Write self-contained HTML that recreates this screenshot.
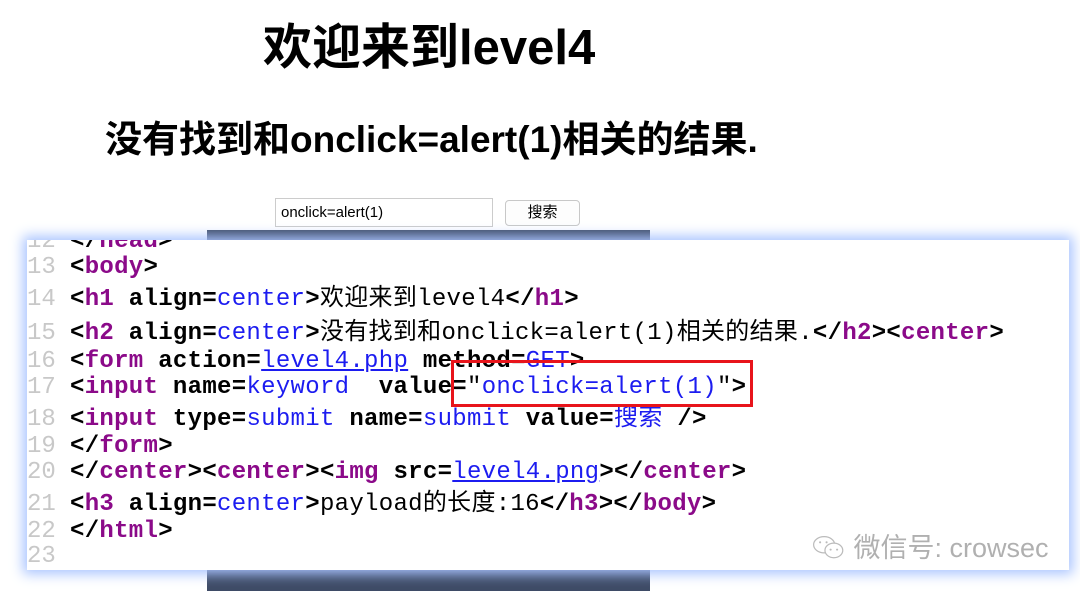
<!DOCTYPE html>
<html><head><meta charset="utf-8"><style>
body{margin:0;width:1080px;height:591px;background:#fff;position:relative;overflow:hidden;font-family:"Liberation Sans","Noto Sans CJK SC",sans-serif}
.h1{position:absolute;left:263px;top:18px;font-size:49px;font-weight:bold;white-space:nowrap;line-height:60px}
.h2{position:absolute;left:105px;top:117px;font-size:37px;font-weight:bold;white-space:nowrap;line-height:46px}
.inp{position:absolute;left:275px;top:198px;width:218px;height:29px;border:1px solid #ccc;box-sizing:border-box;font-size:15px;line-height:27px;padding-left:5px}
.btn{position:absolute;left:505px;top:200px;width:75px;height:26px;border:1px solid #c8c8c8;border-radius:4px;box-sizing:border-box;font-size:15px;text-align:center;line-height:24px;background:#fdfdfd}
.dark{position:absolute;left:207px;top:230px;width:443px;height:361px;background:#3e4b66}
.panel{position:absolute;left:27px;top:240px;width:1042px;height:330px;background:#fff;box-shadow:0 0 12px 4px #a9c4ff;overflow:hidden}
.ln{position:absolute;left:0;font-family:"Liberation Mono","Noto Sans CJK SC",monospace;font-size:24px;line-height:28px;white-space:pre;color:#000;font-weight:bold;letter-spacing:0.3px}
.n{color:#c8c8c8;font-weight:normal;display:inline-block;width:43px;letter-spacing:0}
.t{color:#8b0a89}.v{color:#1c1cf0;font-weight:normal}.u{color:#1c1cf0;font-weight:normal;text-decoration:underline}.p{font-weight:normal}
.red{position:absolute;left:451px;top:360px;width:302px;height:47px;border:3px solid #e8141b;box-sizing:border-box}
.wm{position:absolute;left:812px;top:526px;font-size:27px;color:#b0b0b0;white-space:nowrap}
</style></head><body>
<div class="h1">欢迎来到level4</div>
<div class="h2">没有找到和onclick=alert(1)相关的结果.</div>
<div class="inp">onclick=alert(1)</div>
<div class="btn">搜索</div>
<div class="dark"></div>
<div class="panel">
<div class="ln" style="top:-12px"><span class="n">12</span>&lt;/<span class="t">head</span>&gt;</div>
<div class="ln" style="top:14px"><span class="n">13</span>&lt;<span class="t">body</span>&gt;</div>
<div class="ln" style="top:46px"><span class="n">14</span>&lt;<span class="t">h1</span> align=<span class="v">center</span>&gt;<span class="p">欢迎来到level4</span>&lt;/<span class="t">h1</span>&gt;</div>
<div class="ln" style="top:80px"><span class="n">15</span>&lt;<span class="t">h2</span> align=<span class="v">center</span>&gt;<span class="p">没有找到和onclick=alert(1)相关的结果.</span>&lt;/<span class="t">h2</span>&gt;&lt;<span class="t">center</span>&gt;</div>
<div class="ln" style="top:108px"><span class="n">16</span>&lt;<span class="t">form</span> action=<span class="u">level4.php</span> method=<span class="v">GET</span>&gt;</div>
<div class="ln" style="top:134px"><span class="n">17</span>&lt;<span class="t">input</span> name=<span class="v">keyword</span>  value=<span class="p">"</span><span class="v">onclick=alert(1)</span><span class="p">"</span>&gt;</div>
<div class="ln" style="top:166px"><span class="n">18</span>&lt;<span class="t">input</span> type=<span class="v">submit</span> name=<span class="v">submit</span> value=<span class="v">搜索</span> /&gt;</div>
<div class="ln" style="top:193px"><span class="n">19</span>&lt;/<span class="t">form</span>&gt;</div>
<div class="ln" style="top:219px"><span class="n">20</span>&lt;/<span class="t">center</span>&gt;&lt;<span class="t">center</span>&gt;&lt;<span class="t">img</span> src=<span class="u">level4.png</span>&gt;&lt;/<span class="t">center</span>&gt;</div>
<div class="ln" style="top:251px"><span class="n">21</span>&lt;<span class="t">h3</span> align=<span class="v">center</span>&gt;<span class="p">payload的长度:16</span>&lt;/<span class="t">h3</span>&gt;&lt;/<span class="t">body</span>&gt;</div>
<div class="ln" style="top:278px"><span class="n">22</span>&lt;/<span class="t">html</span>&gt;</div>
<div class="ln" style="top:303px"><span class="n">23</span></div>
</div>
<div class="red"></div>
<div class="wm"><svg width="34" height="30" viewBox="0 0 42 30" style="vertical-align:-6px"><ellipse cx="15" cy="11" rx="13" ry="10" fill="none" stroke="#bbb" stroke-width="1.5"/><ellipse cx="27" cy="18" rx="11" ry="9" fill="#fff" stroke="#bbb" stroke-width="1.5"/><circle cx="23" cy="17" r="1.3" fill="#bbb"/><circle cx="31" cy="17" r="1.3" fill="#bbb"/><circle cx="10" cy="8" r="1.3" fill="#bbb"/><circle cx="18" cy="8" r="1.3" fill="#bbb"/></svg> 微信号: crowsec</div>
</body></html>
